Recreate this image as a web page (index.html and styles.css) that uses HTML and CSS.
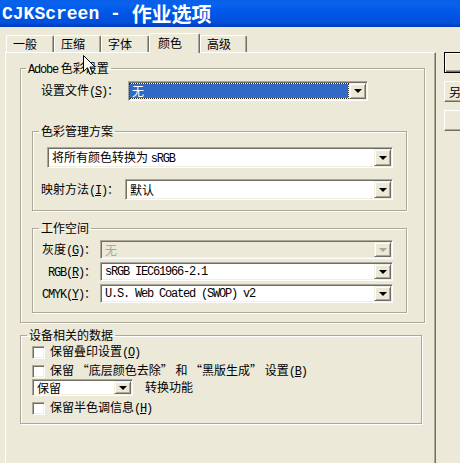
FILE: index.html
```html
<!DOCTYPE html>
<html lang="zh-CN">
<head>
  <meta charset="UTF-8">
  <title>CJKScreen - 作业选项</title>
  <link rel="stylesheet" href="styles.css">
</head>
<body>

  <!-- 标题栏 -->
  <div class="titlebar">
    <span class="title-en">CJKScreen - </span><span class="title-cjk">作业选项</span>
  </div>

  <div class="main">
    <div class="sheet">
      <div class="tabs">
        <div class="tab tab-1">一般</div>
        <div class="tab tab-2">压缩</div>
        <div class="tab tab-3">字体</div>
        <div class="tab tab-4 active">颜色</div>
        <div class="tab tab-5">高级</div>
      </div>

      <div class="page">
        <!-- Adobe 色彩设置 -->
        <fieldset class="group group-adobe">
          <legend><span class="en">Adobe</span> 色彩设置</legend>
          <div class="group-body adobe-body">
            <div class="row row-profile">
              <span class="label label-profile">设置文件<span class="en">(<u>S</u>)</span>：</span>
              <div class="combo combo-profile">
                <div class="val focused">无</div>
                <div class="drop"><span class="arrow"></span></div>
              </div>
            </div>

            <fieldset class="group group-inner">
              <legend>色彩管理方案</legend>
              <div class="group-body cms-body">
                <div class="combo combo-cms">
                  <div class="val">将所有颜色转换为 <span class="en">sRGB</span></div>
                  <div class="drop"><span class="arrow"></span></div>
                </div>
                <div class="row row-intent">
                  <span class="label label-intent">映射方法<span class="en">(<u>I</u>)</span>：</span>
                  <div class="combo combo-intent">
                    <div class="val">默认</div>
                    <div class="drop"><span class="arrow"></span></div>
                  </div>
                </div>
              </div>
            </fieldset>

            <fieldset class="group group-inner group-space">
              <legend>工作空间</legend>
              <div class="group-body space-body">
                <span class="label">灰度<span class="en">(<u>G</u>)</span>：</span>
                <div class="combo combo-space disabled">
                  <div class="val">无</div>
                  <div class="drop"><span class="arrow"></span></div>
                </div>
                <span class="label"><span class="en">RGB(<u>R</u>)</span>：</span>
                <div class="combo combo-space">
                  <div class="val en">sRGB IEC61966-2.1</div>
                  <div class="drop"><span class="arrow"></span></div>
                </div>
                <span class="label"><span class="en">CMYK(<u>Y</u>)</span>：</span>
                <div class="combo combo-space">
                  <div class="val en">U.S. Web Coated (SWOP) v2</div>
                  <div class="drop"><span class="arrow"></span></div>
                </div>
              </div>
            </fieldset>
          </div>
        </fieldset>

        <!-- 设备相关的数据 -->
        <fieldset class="group group-device">
          <legend>设备相关的数据</legend>
          <div class="group-body device-body">
            <div class="check-row"><span class="checkbox"></span><span>保留叠印设置<span class="en">(<u>O</u>)</span></span></div>
            <div class="check-row">
              <span class="checkbox"></span><span>保留 “底层颜色去除” 和 “黑版生成” 设置<span class="en">(<u>B</u>)</span></span>
            </div>
            <div class="row row-transfer">
              <div class="combo combo-transfer">
                <div class="val">保留</div>
                <div class="drop"><span class="arrow"></span></div>
              </div>
              <span class="transfer-label">转换功能</span>
            </div>
            <div class="check-row"><span class="checkbox"></span><span>保留半色调信息<span class="en">(<u>H</u>)</span></span></div>
          </div>
        </fieldset>
      </div>
    </div>

    <div class="side">
      <div class="btn default"></div>
      <div class="btn btn-save">另存为...</div>
      <div class="btn"></div>
    </div>
  </div>

  <!-- 鼠标指针 -->
  <svg class="cursor" width="13" height="21" viewBox="0 0 13 21">
    <path d="M0.5 0.5 L0.5 16.5 L4.5 12.8 L7.2 19.5 L9.6 18.5 L7 12 L12 12 Z" fill="#fff" stroke="#000" stroke-width="1"/>
  </svg>

</body>
</html>
```

FILE: styles.css
```css
body {
  margin: 0;
  width: 460px;
  height: 463px;
  overflow: hidden;
  position: relative;
  background-color: #ece9d8;
  color: #000;
  font-family: "Noto Sans CJK SC", "Liberation Sans", sans-serif;
  font-size: 12px;
  line-height: 14px;
}

.en {
  font-family: "Liberation Mono", "Noto Sans CJK SC", monospace;
  letter-spacing: -1.2px;
}

u {
  text-decoration: underline;
}

/* 标题栏 */
.titlebar {
  height: 27px;
  padding-left: 2px;
  display: flex;
  align-items: center;
  color: #fff;
  font-weight: 700;
  white-space: pre;
  background: linear-gradient(to bottom, #0a5fe6 0%, #0862ee 15%, #0056e6 50%, #004fda 85%, #003cbc 100%);
}

.title-en {
  font-family: "Liberation Mono", monospace;
  font-size: 18px;
}

.title-cjk {
  font-family: "Noto Sans CJK SC", sans-serif;
  font-size: 20px;
}

.main {
  display: flex;
}

.sheet {
  flex-shrink: 0;
  width: 431px;
  margin-left: 5px;
  padding-top: 6px;
}

/* 选项卡 */
.tabs {
  display: flex;
  align-items: flex-end;
  height: 19px;
  padding-left: 1px;
  position: relative;
  z-index: 1;
}

.tab {
  box-sizing: border-box;
  height: 17px;
  display: flex;
  align-items: center;
  padding-left: 6px;
  border: 1px solid;
  border-bottom: none;
  border-color: #fff #716f64 transparent #fff;
  border-radius: 2px 2px 0 0;
  box-shadow: inset -1px 0 #aca899;
}

.tab-1 { width: 48px; }
.tab-2 { width: 47px; }
.tab-3 { width: 48px; }
.tab-4 { width: 51px; }
.tab-5 { width: 47px; }

.tab.active {
  height: 20px;
  margin-bottom: -1px;
  padding-left: 8px;
  padding-bottom: 2px;
  background-color: #ece9d8;
}

.page {
  box-sizing: border-box;
  height: 420px;
  padding-top: 8px;
  padding-left: 14px;
  border-top: 1px solid #fff;
  border-left: 1px solid #fff;
  border-right: 1px solid #716f64;
  box-shadow: inset -1px 0 #aca899;
}

/* 分组框 */
.group {
  box-sizing: border-box;
  margin: 0;
  padding: 0;
  min-width: 0;
  border: 1px solid #aca899;
  box-shadow: inset 1px 1px #fff, 1px 1px #fff;
}

.group legend {
  padding: 0 2px;
  margin-left: 6px;
  height: 14px;
  line-height: 14px;
}

.group-adobe {
  width: 405px;
}

.group-adobe > legend {
  margin-left: 5px;
}

.adobe-body {
  padding: 6px 17px 9px 11px;
}

.row {
  display: flex;
  align-items: center;
}

.row-profile {
  margin-left: 9px;
}

.label-profile {
  width: 87px;
}

.group-inner {
  margin-top: 23px;
}

.group-space {
  margin-top: 10px;
}

.cms-body {
  padding: 9px 13px 10px 14px;
}

.row-intent {
  margin-top: 11px;
  margin-left: -6px;
}

.label-intent {
  width: 84px;
  flex-shrink: 0;
}

.space-body {
  display: grid;
  grid-template-columns: 55px 1fr;
  column-gap: 4px;
  row-gap: 3px;
  align-items: center;
  padding: 5px 13px 9px 0;
  margin-left: 8px;
}

.space-body .label {
  text-align: right;
}

/* 下拉框 */
.combo {
  box-sizing: border-box;
  display: flex;
  height: 21px;
  background-color: #fff;
  border: 1px solid;
  border-color: #aca899 #fff #fff #aca899;
  box-shadow: inset 1px 1px #716f64, inset -1px -1px #f1efe2;
  padding: 1px;
}

.combo .val {
  flex: 1;
  align-self: center;
  padding-left: 3px;
  line-height: 14px;
  white-space: pre;
}

.combo .val.focused {
  align-self: stretch;
  margin: 1px 1px 1px 0;
  padding-left: 2px;
  background-color: #316ac5;
  color: #fff;
  outline: 1px dotted #3a3020;
}

.combo.disabled {
  background-color: #ece9d8;
  color: #aca899;
}

.drop {
  box-sizing: border-box;
  width: 17px;
  display: flex;
  align-items: center;
  justify-content: center;
  background-color: #ece9d8;
  border: 1px solid;
  border-color: #f1efe2 #716f64 #716f64 #f1efe2;
  box-shadow: inset 1px 1px #fff, inset -1px -1px #aca899;
}

.arrow {
  width: 0;
  height: 0;
  border-left: 4px solid transparent;
  border-right: 4px solid transparent;
  border-top: 4px solid #000;
}

.disabled .arrow {
  border-top-color: #aca899;
}

.combo-profile {
  width: 240px;
  height: 20px;
}

.combo-intent {
  flex: 1;
}

.combo-space {
  height: 19px;
}

/* 设备相关的数据 */
.group-device {
  width: 402px;
  margin-top: 5px;
}

.device-body {
  padding: 3px 0 8px 11px;
}

.check-row {
  display: flex;
  align-items: center;
  height: 14px;
  margin-top: 5px;
  white-space: pre;
}

.check-row:first-child {
  margin-top: 0;
}

.checkbox {
  box-sizing: border-box;
  width: 13px;
  height: 13px;
  margin-right: 5px;
  background-color: #fff;
  border: 1px solid;
  border-color: #aca899 #fff #fff #aca899;
  box-shadow: inset 1px 1px #716f64, inset -1px -1px #f1efe2;
}

.row-transfer {
  margin-top: 1px;
  margin-bottom: 1px;
}

.combo-transfer {
  width: 101px;
  height: 17px;
}

.transfer-label {
  margin-left: 12px;
  margin-top: -2px;
}

/* 右侧按钮 */
.side {
  flex-shrink: 0;
  margin-left: 8px;
  padding-top: 25px;
}

.btn {
  box-sizing: border-box;
  width: 80px;
  height: 21px;
  margin-bottom: 8px;
  display: flex;
  align-items: center;
  justify-content: center;
  white-space: nowrap;
  border: 1px solid;
  border-color: #fff #716f64 #716f64 #fff;
  box-shadow: inset -1px -1px #aca899;
}

.btn.default {
  border-color: #000;
  box-shadow: inset 1px 1px #fff, inset -1px -1px #716f64, inset -2px -2px #aca899;
}

.btn-save {
  justify-content: flex-start;
  padding-left: 4px;
}

.cursor {
  position: absolute;
  left: 83px;
  top: 55px;
}
```
